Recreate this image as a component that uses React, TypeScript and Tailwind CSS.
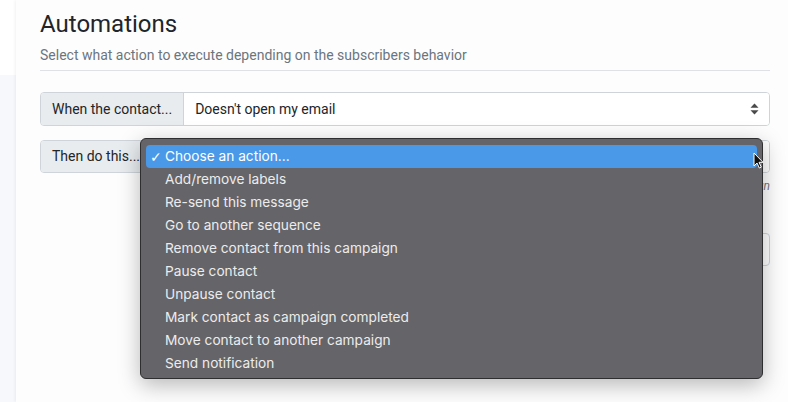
import React from 'react';

const actions = [
  'Add/remove labels',
  'Re-send this message',
  'Go to another sequence',
  'Remove contact from this campaign',
  'Pause contact',
  'Unpause contact',
  'Mark contact as campaign completed',
  'Move contact to another campaign',
  'Send notification',
];

function SelectArrows() {
  return (
    <svg width="9" height="12" viewBox="0 0 9 12" className="text-[#4a4a4a]">
      <path d="M4.5 0.5 L8.5 4.8 H0.5 Z" fill="currentColor" />
      <path d="M4.5 11.5 L8.5 7.2 H0.5 Z" fill="currentColor" />
    </svg>
  );
}

function Cursor() {
  return (
    <svg width="11" height="17" viewBox="0 0 11 17" className="absolute left-[753px] top-[152px]">
      <path d="M1 1 L1 14 L4 11 L6.3 16 L8.3 15.1 L6 10.3 L10 10.3 Z" fill="#111" stroke="#fff" strokeWidth="1" strokeLinejoin="round" />
    </svg>
  );
}

export default function App() {
  return (
    <div className="relative w-[788px] h-[402px] overflow-hidden flex bg-[#f6f8fb] font-['Roboto',sans-serif] text-[#212529]">
      <div className="w-4 flex flex-col">
        <div className="h-[75px] bg-white" />
        <div className="flex-1 bg-[#f6f8fb]" />
      </div>

      <div className="flex-1 bg-[#fdfdfd] shadow-[-1px_0_3px_rgba(0,0,0,0.06)] pl-6 pr-[18px] pt-[9px]">
        <h1 className="text-[24px] leading-[30px] font-normal">Automations</h1>
        <p className="mt-[7px] text-[14px] leading-[18px] text-[#6c757d]">
          Select what action to execute depending on the subscribers behavior
        </p>
        <div className="mt-[6px] h-px bg-[#dee2e6]" />

        <div className="mt-[21px] flex h-[34px] rounded-[4px] border border-[#ced4da] text-[14px] overflow-hidden">
          <div className="flex items-center px-[11px] bg-[#e9ecef] border-r border-[#ced4da]">When the contact...</div>
          <div className="flex-1 flex items-center justify-between bg-white pl-[11px] pr-[10px]">
            <span>Doesn't open my email</span>
            <SelectArrows />
          </div>
        </div>

        {/* select is open: its value is hidden under the menu */}
        <div className="mt-[14px] flex h-[33px] rounded-[4px] border border-[#ced4da] text-[14px] overflow-hidden">
          <div className="flex items-center px-[11px] bg-[#e9ecef] border-r border-[#ced4da]">Then do this...</div>
          <div className="flex-1 flex items-center justify-end bg-white pr-[10px]">
            <SelectArrows />
          </div>
        </div>
        <p className="mt-[5px] text-right text-[12px] leading-[16px] italic text-[#6c757d]">
          Choose the action to run when the condition is met by the contact on the campaign
        </p>

        <div className="mt-[39px] ml-auto w-[420px] h-[33px] rounded-[4px] border border-[#ced4da] bg-white" />
      </div>

      <div className="absolute left-[140px] top-[138px] w-[623px] h-[241px] rounded-[6px] border border-[#2e2e30] bg-[#656469] shadow-[0_6px_22px_rgba(0,0,0,0.28)] px-[5px] pt-[6px] font-['Inter',sans-serif] text-[13.7px] text-[#ececec]">
        <div className="h-[23px] flex items-center pl-[4px] rounded-[4px] bg-[#4a98e8] text-white">
          <span className="w-[15px] shrink-0 font-['DejaVu_Sans',sans-serif] text-[14px] leading-none">✓</span>
          <span>Choose an action...</span>
        </div>
        {actions.map((a) => (
          <div key={a} className="h-[23px] flex items-center pl-[19px]">{a}</div>
        ))}
      </div>

      <Cursor />
    </div>
  );
}
